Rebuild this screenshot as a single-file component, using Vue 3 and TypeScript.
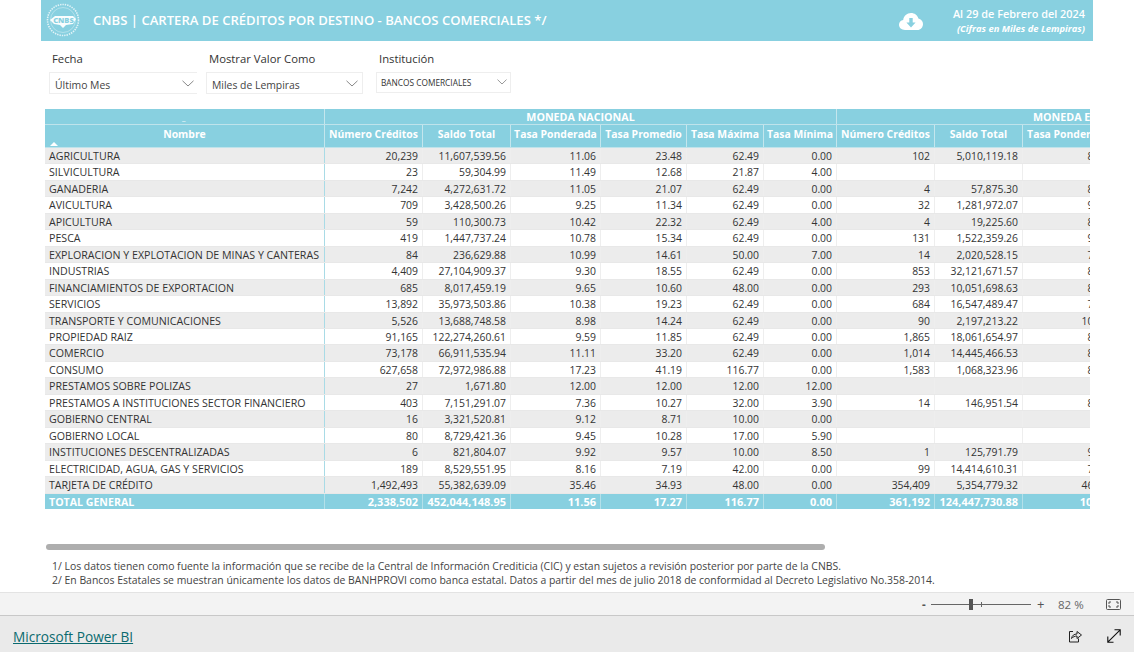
<script setup lang="ts">
interface Row { name: string; v: string[] }
const rows: Row[] = [
  ['AGRICULTURA','20,239','11,607,539.56','11.06','23.48','62.49','0.00','102','5,010,119.18','8.52'],
  ['SILVICULTURA','23','59,304.99','11.49','12.68','21.87','4.00','','',''],
  ['GANADERIA','7,242','4,272,631.72','11.05','21.07','62.49','0.00','4','57,875.30','8.50'],
  ['AVICULTURA','709','3,428,500.26','9.25','11.34','62.49','0.00','32','1,281,972.07','9.11'],
  ['APICULTURA','59','110,300.73','10.42','22.32','62.49','4.00','4','19,225.60','8.00'],
  ['PESCA','419','1,447,737.24','10.78','15.34','62.49','0.00','131','1,522,359.26','9.20'],
  ['EXPLORACION Y EXPLOTACION DE MINAS Y CANTERAS','84','236,629.88','10.99','14.61','50.00','7.00','14','2,020,528.15','7.50'],
  ['INDUSTRIAS','4,409','27,104,909.37','9.30','18.55','62.49','0.00','853','32,121,671.57','8.33'],
  ['FINANCIAMIENTOS DE EXPORTACION','685','8,017,459.19','9.65','10.60','48.00','0.00','293','10,051,698.63','8.41'],
  ['SERVICIOS','13,892','35,973,503.86','10.38','19.23','62.49','0.00','684','16,547,489.47','7.90'],
  ['TRANSPORTE Y COMUNICACIONES','5,526','13,688,748.58','8.98','14.24','62.49','0.00','90','2,197,213.22','10.20'],
  ['PROPIEDAD RAIZ','91,165','122,274,260.61','9.59','11.85','62.49','0.00','1,865','18,061,654.97','8.10'],
  ['COMERCIO','73,178','66,911,535.94','11.11','33.20','62.49','0.00','1,014','14,445,466.53','8.26'],
  ['CONSUMO','627,658','72,972,986.88','17.23','41.19','116.77','0.00','1,583','1,068,323.96','8.75'],
  ['PRESTAMOS SOBRE POLIZAS','27','1,671.80','12.00','12.00','12.00','12.00','','',''],
  ['PRESTAMOS A INSTITUCIONES SECTOR FINANCIERO','403','7,151,291.07','7.36','10.27','32.00','3.90','14','146,951.54','8.00'],
  ['GOBIERNO CENTRAL','16','3,321,520.81','9.12','8.71','10.00','0.00','','',''],
  ['GOBIERNO LOCAL','80','8,729,421.36','9.45','10.28','17.00','5.90','','',''],
  ['INSTITUCIONES DESCENTRALIZADAS','6','821,804.07','9.92','9.57','10.00','8.50','1','125,791.79','9.00'],
  ['ELECTRICIDAD, AGUA, GAS Y SERVICIOS','189','8,529,551.95','8.16','7.19','42.00','0.00','99','14,414,610.31','7.80'],
  ['TARJETA DE CRÉDITO','1,492,493','55,382,639.09','35.46','34.93','48.00','0.00','354,409','5,354,779.32','46.00'],
].map((r) => ({ name: r[0], v: r.slice(1) }))
const total: string[] = ['2,338,502','452,044,148.95','11.56','17.27','116.77','0.00','361,192','124,447,730.88','10.25']
const heads: string[] = ['Número Créditos','Saldo Total','Tasa Ponderada','Tasa Promedio','Tasa Máxima','Tasa Mínima','Número Créditos','Saldo Total','Tasa Ponderada']
</script>

<template>
  <div class="page">
    <main class="report">
      <header class="banner">
        <svg class="logo" width="34" height="34" viewBox="0 0 34 34" aria-hidden="true">
          <circle cx="17" cy="17" r="15.5" fill="none" stroke="#fff" stroke-opacity=".75" stroke-width="1.6" stroke-dasharray="1.4 1" />
          <circle cx="17" cy="17" r="12.5" fill="none" stroke="#fff" stroke-opacity=".35" stroke-width="1" />
          <path d="M4 17 L9 13 H27 L30 16 L27 21 L20 22 L17 25 L14 22 L8 21 Z" fill="#fff" fill-opacity=".95" />
          <text x="17.5" y="20" text-anchor="middle" class="logo-text">CNBS</text>
        </svg>
        <h1 class="title">CNBS | CARTERA DE CRÉDITOS POR DESTINO - BANCOS COMERCIALES */</h1>
        <svg class="cloud" width="24" height="17" viewBox="0 0 24 17" aria-hidden="true">
          <path d="M6 17 C2.5 17 0 14.8 0 11.8 C0 9.2 1.8 7.4 4.2 7 C4.6 3 8 0 12 0 C15.6 0 18.4 2.2 19.4 5.4 C22 5.8 24 8.2 24 11 C24 14.4 21.6 17 18.4 17 Z" fill="#fff" />
          <path d="M10.3 5 H13.7 V9.6 H16.6 L12 14.6 L7.4 9.6 H10.3 Z" fill="#88d0e0" />
        </svg>
        <div class="asof">
          <div class="asof-date">Al 29 de Febrero del 2024</div>
          <div class="asof-unit">(Cifras en Miles de Lempiras)</div>
        </div>
      </header>

      <section class="filters">
        <div class="filter f1">
          <label>Fecha</label>
          <div class="select no-right"><span>Último Mes</span>
            <svg width="12" height="7" viewBox="0 0 12 7"><path d="M.5.8 6 6 11.5.8" fill="none" stroke="#888" /></svg>
          </div>
        </div>
        <div class="filter f2">
          <label>Mostrar Valor Como</label>
          <div class="select"><span>Miles de Lempiras</span>
            <svg width="12" height="7" viewBox="0 0 12 7"><path d="M.5.8 6 6 11.5.8" fill="none" stroke="#888" /></svg>
          </div>
        </div>
        <div class="filter f3">
          <label>Institución</label>
          <div class="select small"><span>BANCOS COMERCIALES</span>
            <svg width="10" height="6" viewBox="0 0 10 6"><path d="M.5.6 5 5 9.5.6" fill="none" stroke="#999" /></svg>
          </div>
        </div>
      </section>

      <section class="matrix">
        <div class="inner">
          <div class="group-row">
            <div class="g g0"><span class="dash">_</span></div>
            <div class="g g1">MONEDA NACIONAL</div>
            <div class="g g2">MONEDA EXTRANJERA</div>
          </div>
          <div class="grid head">
            <div class="cell name-head">Nombre<span class="sort"></span></div>
            <div v-for="(h, i) in heads" :key="i" class="cell h">{{ h }}</div>
          </div>
          <div v-for="(r, i) in rows" :key="r.name" class="grid body" :class="{ odd: i % 2 === 0 }">
            <div class="cell name">{{ r.name }}</div>
            <div v-for="(c, j) in r.v" :key="j" class="cell num">{{ c }}</div>
          </div>
          <div class="grid totals">
            <div class="cell name">TOTAL GENERAL</div>
            <div v-for="(c, j) in total" :key="j" class="cell num">{{ c }}</div>
          </div>
        </div>
      </section>

      <div class="scroll"><div class="thumb"></div></div>

      <footer class="notes">
        <p>1/ Los datos tienen como fuente la información que se recibe de la Central de Información Crediticia (CIC) y estan sujetos a revisión posterior por parte de la CNBS.</p>
        <p>2/ En Bancos Estatales se muestran únicamente los datos de BANHPROVI como banca estatal. Datos a partir del mes de julio 2018 de conformidad al Decreto Legislativo No.358-2014.</p>
      </footer>
    </main>

    <div class="zoombar">
      <span class="minus">-</span>
      <div class="track"><span class="knob"></span><span class="tick"></span></div>
      <span class="plus">+</span>
      <span class="pct">82 %</span>
      <svg class="fit" width="15" height="11" viewBox="0 0 15 11" aria-hidden="true">
        <rect x=".5" y=".5" width="14" height="10" rx="1" fill="none" stroke="#555" />
        <path d="M5 3H3V5M10 3H12V5M5 8H3V6M10 8H12V6" fill="none" stroke="#555" />
      </svg>
    </div>

    <div class="pbi">
      <a class="link" href="#">Microsoft Power BI</a>
      <svg class="share" width="14" height="14" viewBox="0 0 14 14" aria-hidden="true">
        <path d="M5 2.5H1.5V13H10.5V9.5" fill="none" stroke="#222" />
        <path d="M3.5 9.5C4 6.5 6 5 9 5V2.5L13.5 6L9 9.5V7C7 7 5 7.8 3.5 9.5Z" fill="none" stroke="#222" />
      </svg>
      <svg class="expand" width="14" height="14" viewBox="0 0 14 14" aria-hidden="true">
        <path d="M.8 13.2 13.2.8M7.5.8H13.2V6.5M.8 7.5V13.2H6.5" fill="none" stroke="#111" stroke-width="1.1" />
      </svg>
    </div>
  </div>
</template>

<style>
html, body { margin: 0; background: #fff; }
</style>

<style scoped>
.page {
  width: 1134px;
  height: 652px;
  display: flex;
  flex-direction: column;
  overflow: hidden;
  font-family: "Open Sans", "Noto Sans", sans-serif;
  color: #333;
}
.report { height: 592px; flex: none; background: #fff; }
.banner {
  margin-left: 41px;
  width: 1052px;
  height: 41px;
  background: #88d0e0;
  color: #fff;
  display: flex;
  align-items: center;
  box-sizing: border-box;
  padding-left: 5px;
}
.logo { flex: none; margin-top: -1px; }
.logo-text { font-size: 7.5px; font-weight: 800; fill: #88d0e0; }
.title { margin: 0 0 2px 13px; font-size: 13.1px; font-weight: 600; white-space: nowrap; flex: 1; }
.cloud { flex: none; margin-right: 24px; margin-top: 1px; }
.asof { text-align: right; padding-right: 8px; width: 146px; flex: none; box-sizing: border-box; }
.asof-date { font-size: 10.9px; font-weight: 600; line-height: 15px; white-space: nowrap; }
.asof-unit { font-size: 9.4px; font-style: italic; font-weight: 700; line-height: 15px; white-space: nowrap; }

.filters { display: flex; height: 68px; padding-top: 9px; box-sizing: border-box; margin-left: 49px; }
.filter label { display: block; font-size: 11.3px; line-height: 18px; padding-left: 3px; color: #333; margin-bottom: 4px; }
.f1 { width: 157px; }
.f2 { width: 170px; }
.select {
  height: 22px;
  box-sizing: border-box;
  border: 1px solid #eee;
  display: flex;
  align-items: center;
  justify-content: space-between;
  padding: 3px 5px 0 5px;
  font-size: 10.4px;
  color: #444;
}
.select svg { margin-top: -3px; }
.f1 .select { width: 148px; border-right: none; padding-right: 3px; }
.f2 .select { width: 157px; padding-right: 4px; }
.f3 .select { width: 135px; height: 21px; padding: 0 3px 1px 4px; font-size: 8.3px; color: #333; }
.f3 .select svg { margin-top: 0; }

.matrix { margin-left: 45px; width: 1045px; height: 400px; overflow: hidden; }
.inner { width: 1070px; }
.group-row { display: flex; height: 16px; background: #88d0e0; color: #fff; font-size: 10.7px; font-weight: 700; line-height: 16px; border-bottom: 1px solid #bfe3eb; box-sizing: border-box; }
.g { box-sizing: border-box; white-space: nowrap; overflow: hidden; }
.g0 { width: 280px; border-right: 1px solid #c4e6ed; text-align: center; position: relative; }
.dash { position: absolute; left: 137px; top: 1px; font-size: 8px; font-weight: 400; }
.g1 { width: 512px; text-align: center; border-right: 1px solid #c4e6ed; }
.g2 { flex: 1; padding-left: 196px; }
.grid { display: grid; grid-template-columns: 280px 98px 88px 90px 86px 77px 73px 98px 88px 92px; }
.head { height: 23px; background: #88d0e0; color: #fff; font-size: 10.4px; font-weight: 700; border-bottom: 1px solid #bfe3eb; box-sizing: border-box; }
.cell { box-sizing: border-box; white-space: nowrap; overflow: hidden; }
.h { text-align: center; line-height: 19px; border-right: 1px solid #c4e6ed; }
.name-head { text-align: center; line-height: 19px; border-right: 1px solid #c4e6ed; position: relative; }
.sort { position: absolute; left: 5px; bottom: 1px; border-left: 4px solid transparent; border-right: 4px solid transparent; border-bottom: 4px solid #fff; }
.body { height: 16.46px; font-size: 10.4px; line-height: 16px; color: #333; background: #fff; border-bottom: 1px solid #e8e8e8; box-sizing: border-box; }
.body.odd { background: #ececec; }
.num { text-align: right; padding-right: 4px; border-right: 1px solid #eeeeee; }
.num:last-child { padding-right: 6px; }
.name { padding-left: 4px; font-size: 10.65px; border-right: 1px solid #a9dbe6; }
.totals { height: 15.5px; background: #88d0e0; color: #fff; font-size: 11px; font-weight: 700; line-height: 16px; }
.totals .num, .totals .name { border-right: 1px solid #b4e0e9; }
.totals .name { font-size: 10.6px; }

.scroll { margin-top: 35px; }
.thumb { margin-left: 46px; width: 779px; height: 6px; border-radius: 3px; background: #aeaeae; }
.notes { margin-top: 10px; padding-left: 52px; font-size: 10.43px; line-height: 13.5px; color: #444; }
.notes p { margin: 0; white-space: nowrap; }

.zoombar {
  height: 24px;
  flex: none;
  box-sizing: border-box;
  background: #f3f3f3;
  border-top: 1px solid #e3e3e3;
  border-bottom: 1px solid #c8c8c8;
  display: flex;
  align-items: center;
  padding-left: 922px;
  font-size: 11.5px;
  color: #555;
}
.minus { width: 9px; font-weight: 700; }
.track { width: 100px; height: 1px; background: #666; position: relative; }
.knob { position: absolute; left: 38px; top: -5px; width: 4px; height: 11px; background: #555; }
.tick { position: absolute; left: 50px; top: -2px; width: 1px; height: 5px; background: #666; }
.plus { margin-left: 6px; width: 12px; font-size: 13px; }
.pct { margin-left: 9px; width: 48px; color: #666; }
.fit { flex: none; }

.pbi {
  flex: 1;
  background: #eaeaea;
  display: flex;
  align-items: center;
  padding: 3px 0 0 13px;
}
.link { font-size: 13.65px; color: #0b6a6f; text-decoration: underline; flex: 1; margin-top: 1px; }
.share { margin-right: 25px; }
.expand { margin-right: 13px; }
</style>
